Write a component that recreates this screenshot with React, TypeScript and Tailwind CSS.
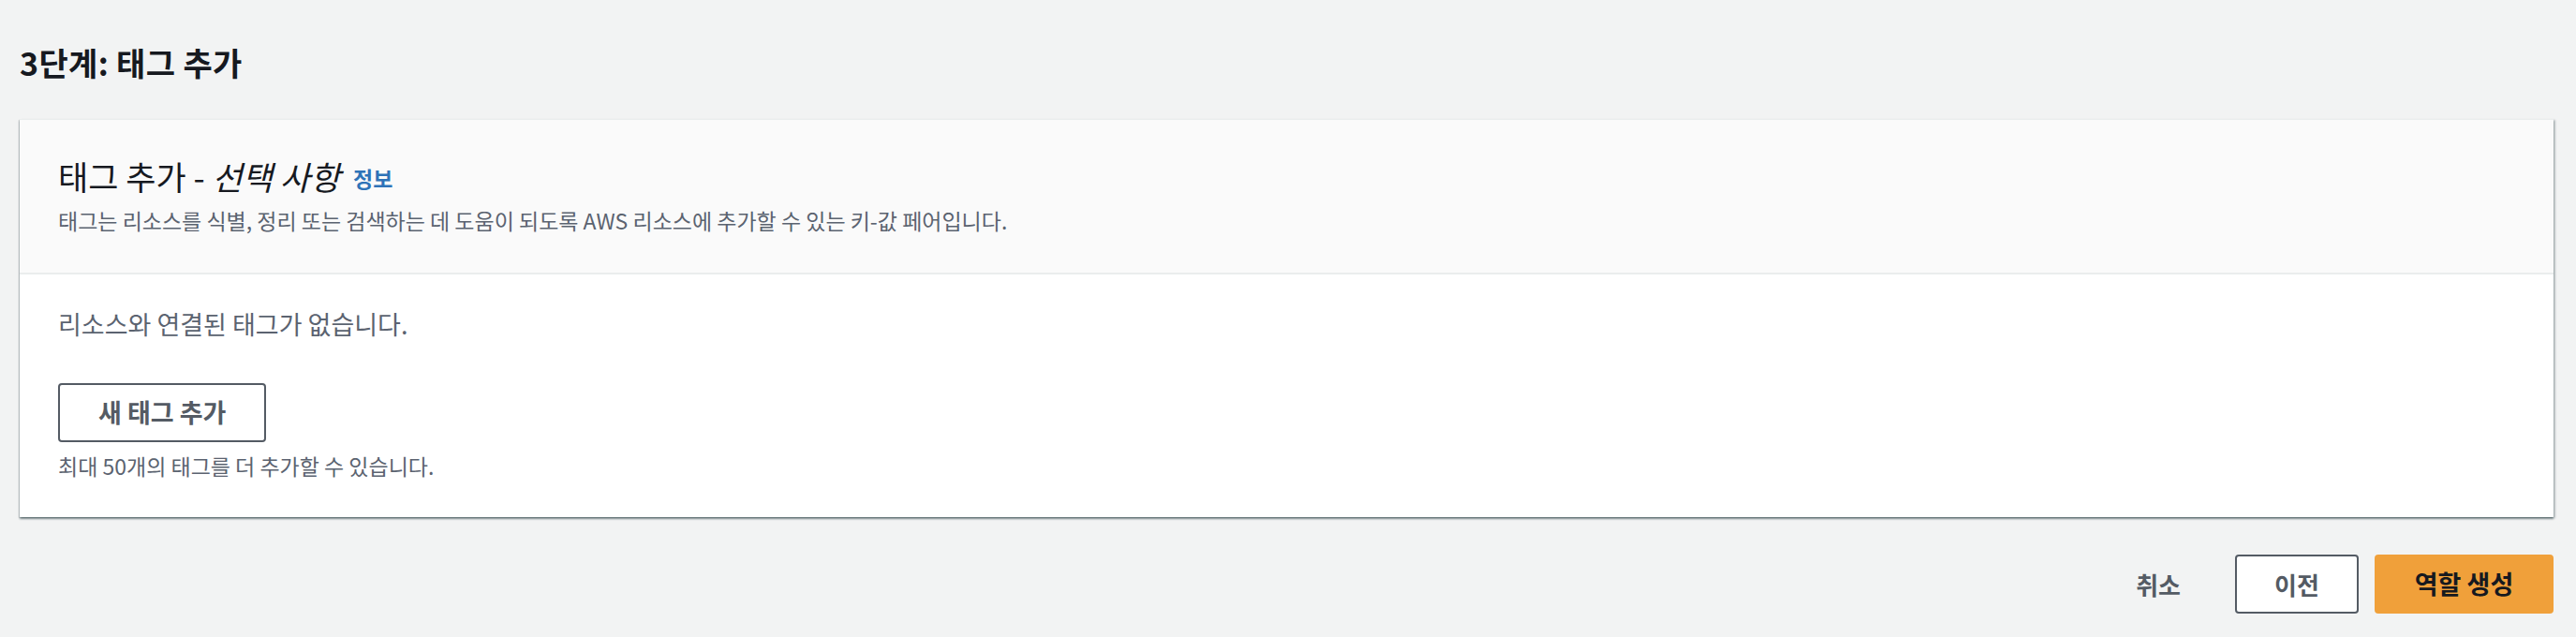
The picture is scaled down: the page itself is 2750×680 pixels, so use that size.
export default function App() {
  return (
    <div
      className="min-h-[680px] w-full bg-[#f2f3f3] pl-[21px] pr-[24px] pt-[47px] pb-[24px] text-[#16191f]"
      style={{ fontFamily: '"Noto Sans CJK KR", "Noto Sans", sans-serif' }}
    >
      <h1 className="m-0 h-[40px] text-[34px] font-bold leading-[40px] tracking-[0.01em]">
        3단계: 태그 추가
      </h1>

      {/* Tags container */}
      <div className="mt-[40px] border-t border-[#eaeded] bg-white shadow-[0_2px_2px_0_rgba(0,28,36,0.45),2px_1px_2px_0_rgba(0,28,36,0.2),-1px_1px_1px_0_rgba(0,28,36,0.12)]">
        <div className="border-b-2 border-[#eaeded] bg-[#fafafa] px-[41px] pt-[38px] pb-[41px]">
          <div className="flex h-[44px] items-center">
            <span className="text-[35px] leading-[44px] text-[#16191f]">
              태그 추가 - <span className="italic">선택 사항</span>
            </span>
            <a className="ml-[14px] mt-[4px] text-[23px] font-bold leading-[30px] text-[#2e73b8]">정보</a>
          </div>
          <p className="mt-[10px] h-[30px] text-[23px] leading-[30px] text-[#5b6370]">
            태그는 리소스를 식별, 정리 또는 검색하는 데 도움이 되도록 AWS 리소스에 추가할 수 있는 키-값 페어입니다.
          </p>
        </div>

        <div className="px-[41px] pt-[36px] pb-[41px]">
          <p className="h-[34px] text-[27px] leading-[34px] text-[#5b6370]">리소스와 연결된 태그가 없습니다.</p>
          <button className="mt-[46px] h-[63px] rounded-[4px] border-2 border-[#545b64] bg-white px-[41px] text-[27px] font-bold text-[#545b64]">
            새 태그 추가
          </button>
          <p className="mt-[11px] h-[28px] text-[23px] leading-[28px] text-[#5b6370]">
            최대 50개의 태그를 더 추가할 수 있습니다.
          </p>
        </div>
      </div>

      {/* Footer actions */}
      <div className="mt-[40px] flex items-center justify-end">
        <button className="h-[63px] px-[4px] text-[26px] font-bold text-[#545b64]">취소</button>
        <button className="ml-[54px] h-[63px] w-[132px] rounded-[4px] border-2 border-[#545b64] bg-white text-[26px] font-bold text-[#545b64]">
          이전
        </button>
        <button className="ml-[17px] h-[63px] w-[191px] rounded-[4px] bg-[#f0a03a] text-[27px] font-bold text-[#16191f]">
          역할 생성
        </button>
      </div>
    </div>
  );
}
